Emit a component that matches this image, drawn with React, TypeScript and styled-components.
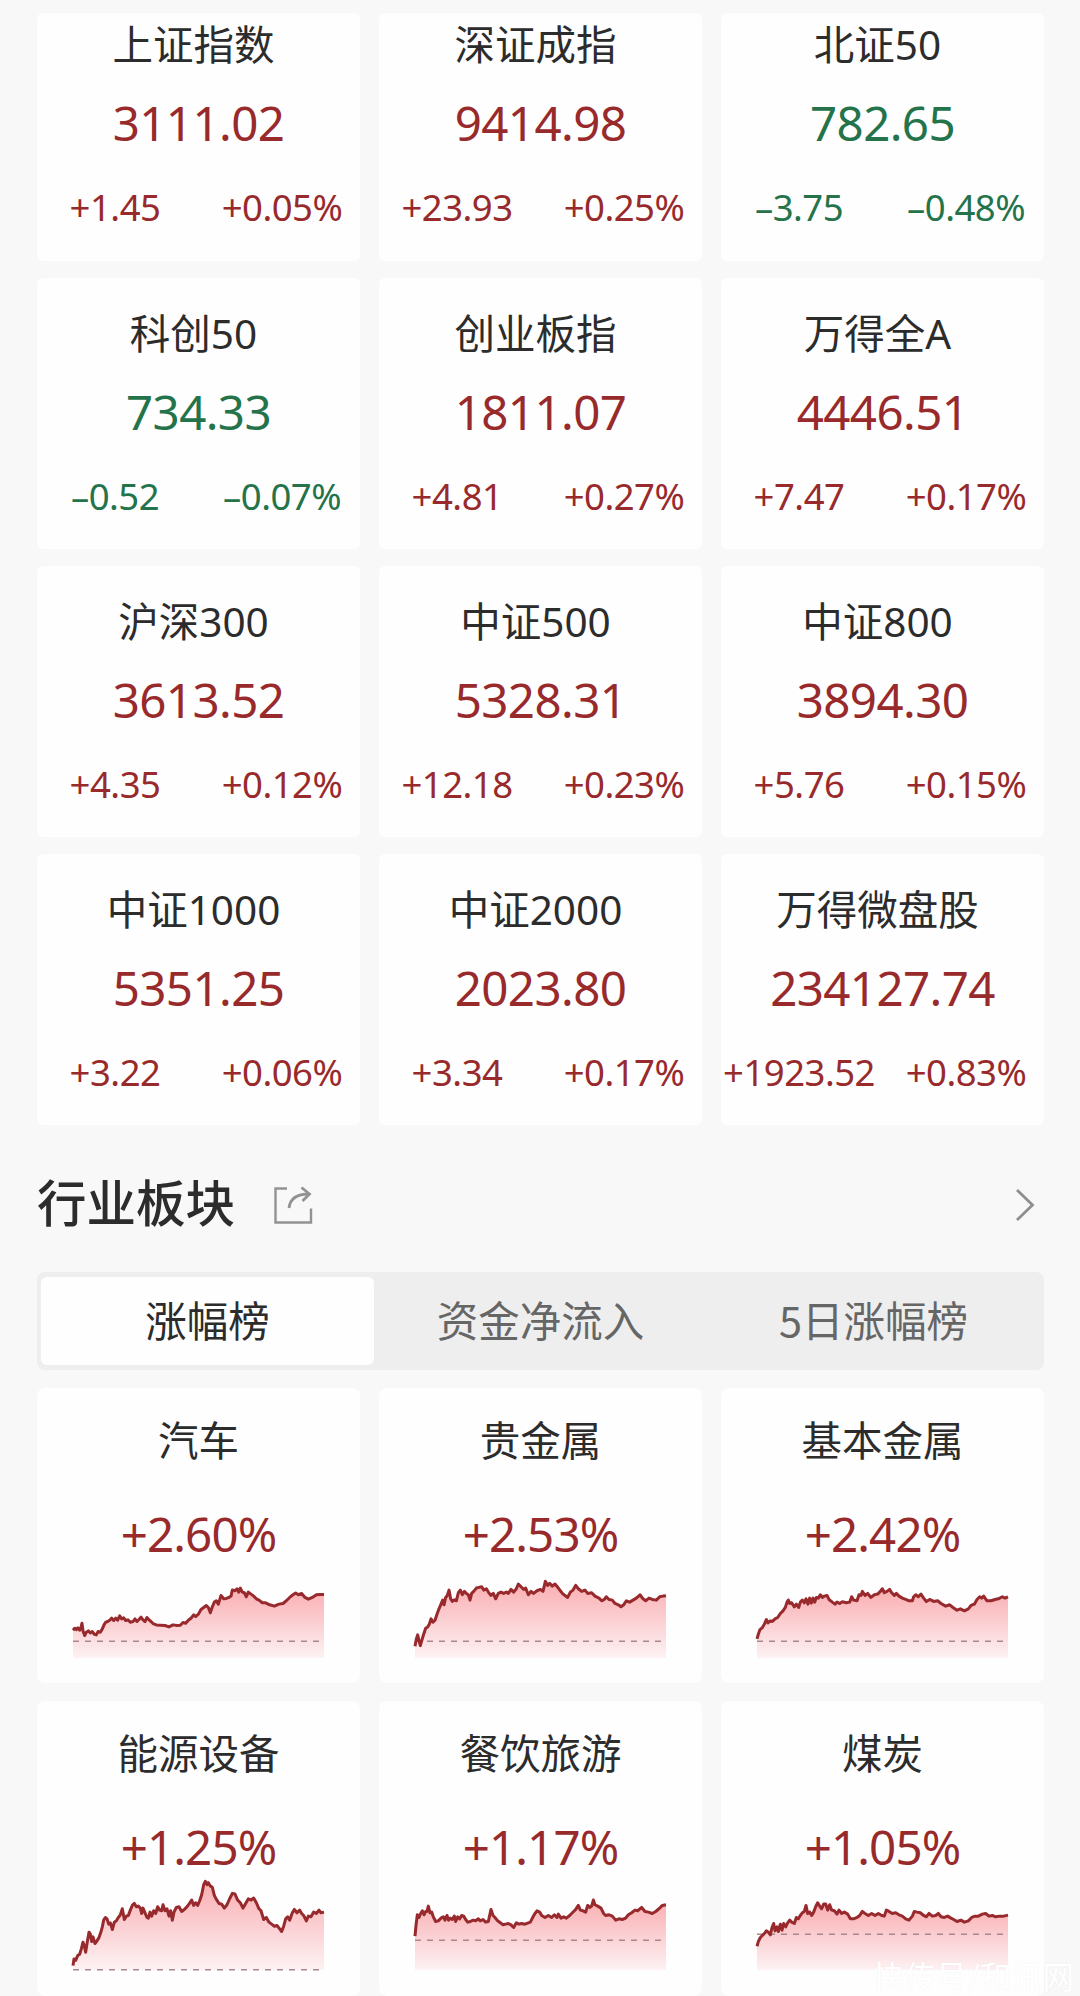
import React from 'react';
import styled, { createGlobalStyle } from 'styled-components';

const CJK = "'Noto Sans CJK SC', sans-serif";
const NUM = "'Noto Sans', 'Noto Sans CJK SC', sans-serif";
const RED = '#982a2c';
const GREEN = '#24734a';

const GlobalStyle = createGlobalStyle`
  * { box-sizing: border-box; }
  body { margin: 0; background: #f7f7f7; }
`;

const Page = styled.main`
  position: relative;
  width: 1080px;
  height: 1996px;
  padding: 13px 36px 0 37px;
  overflow: hidden;
  background: #f8f8f8;
  color: #2c2c2c;
  font-family: ${CJK};
`;

const Grid = styled.section<{ $gap: number }>`
  display: grid;
  grid-template-columns: repeat(3, 323px);
  justify-content: space-between;
  row-gap: ${(p) => p.$gap}px;
`;

const IndexCard = styled.article<{ $first: boolean }>`
  height: ${(p) => (p.$first ? 248 : 271)}px;
  padding-top: ${(p) => (p.$first ? 4 : 28)}px;
  border-radius: 6px;
  background: #fefefe;
`;

const IndexName = styled.h3`
  margin: 0 10px 0 0;
  font-family: ${NUM};
  font-weight: 400;
  font-size: 40.5px;
  line-height: 56px;
  text-align: center;
`;

const IndexValue = styled.div<{ $down?: boolean }>`
  margin-top: 18px;
  color: ${(p) => (p.$down ? GREEN : RED)};
  font-family: ${NUM};
  font-size: 47.5px;
  line-height: 64px;
  letter-spacing: -0.6px;
  text-align: center;
`;

const Changes = styled.div<{ $down?: boolean }>`
  display: grid;
  grid-template-columns: 156px 167px;
  margin-top: 27px;
  color: ${(p) => (p.$down ? GREEN : RED)};
  font-family: ${NUM};
  font-size: 36.5px;
  line-height: 50px;
  letter-spacing: -0.5px;
  white-space: nowrap;
`;

const Amount = styled.span`
  display: flex;
  justify-content: center;
`;

const Percent = styled(Amount)`
  padding-left: 11px;
`;

const SectionHead = styled.header`
  display: flex;
  align-items: center;
  height: 72px;
  margin-top: 42px;
`;

const SectionTitle = styled.h2`
  margin: 0;
  padding-bottom: 5px;
  font-size: 49.5px;
  font-weight: 500;
  line-height: 67px;
`;

const ShareIcon = styled.svg`
  width: 40px;
  height: 40px;
  margin: 3px 0 0 38px;
`;

const ChevronIcon = styled.svg`
  width: 20px;
  height: 34px;
  margin: 4px 9px 0 auto;
`;

const Tabs = styled.nav`
  display: grid;
  grid-template-columns: repeat(3, 1fr);
  height: 98px;
  margin-top: 33px;
  padding: 5px 4px;
  border-radius: 8px;
  background: #eeeeee;
`;

const Tab = styled.button<{ $active?: boolean }>`
  padding: 0 0 4px;
  border: 0;
  border-radius: 6px;
  background: ${(p) => (p.$active ? '#fefefe' : 'transparent')};
  color: ${(p) => (p.$active ? '#2c2c2c' : '#666')};
  font-family: ${CJK};
  font-size: 41.5px;
  line-height: 60px;
`;

const SectorArea = styled.div`
  margin-top: 18px;
`;

const SectorCard = styled.article`
  display: flex;
  flex-direction: column;
  align-items: center;
  height: 295px;
  padding-top: 23px;
  border-radius: 8px;
  background: #fefefe;
`;

const SectorName = styled.h3`
  margin: 0;
  font-weight: 400;
  font-size: 40.5px;
  line-height: 56px;
`;

const SectorChange = styled.div`
  margin-top: 35px;
  color: ${RED};
  font-family: ${NUM};
  font-size: 47.5px;
  line-height: 64px;
  letter-spacing: -0.9px;
`;

const Chart = styled.svg`
  display: block;
  width: 251px;
  height: 90px;
  margin-top: 1.5px;
  overflow: visible;
`;

const Watermark = styled.span`
  position: absolute;
  right: 6px;
  top: 1955px;
  color: #fff;
  font-size: 31.5px;
  line-height: 40px;
  text-shadow: 0 0 2px rgba(0, 0, 0, 0.05);
`;

type Index = [name: string, value: string, amount: string, percent: string];

const indices: Index[] = [
  ['上证指数', '3111.02', '+1.45', '+0.05%'],
  ['深证成指', '9414.98', '+23.93', '+0.25%'],
  ['北证50', '782.65', '–3.75', '–0.48%'],
  ['科创50', '734.33', '–0.52', '–0.07%'],
  ['创业板指', '1811.07', '+4.81', '+0.27%'],
  ['万得全A', '4446.51', '+7.47', '+0.17%'],
  ['沪深300', '3613.52', '+4.35', '+0.12%'],
  ['中证500', '5328.31', '+12.18', '+0.23%'],
  ['中证800', '3894.30', '+5.76', '+0.15%'],
  ['中证1000', '5351.25', '+3.22', '+0.06%'],
  ['中证2000', '2023.80', '+3.34', '+0.17%'],
  ['万得微盘股', '234127.74', '+1923.52', '+0.83%'],
];

interface Sector {
  name: string;
  change: string;
  base: number;
  line: string;
}

/* Line points are in chart units: 753 wide, 269 high. */
const sectors: Sector[] = [
  {
    name: '汽车', change: '+2.60%', base: 219,
    line: '0,186 5,180 10,184 15,179 20,186 24,178 27,165 30,188 35,202 40,192 46,188 52,194 58,190 64,198 70,200 75,190 82,192 88,182 93,170 98,162 104,160 110,156 116,150 122,157 128,150 134,156 140,143 146,152 152,149 158,157 165,155 172,162 180,160 186,152 192,160 198,154 204,147 210,155 216,160 222,148 228,155 234,160 240,166 250,170 262,171 276,172 288,176 300,170 312,172 322,171 330,163 338,165 346,156 354,150 362,140 368,145 376,138 384,124 392,118 400,112 406,118 412,134 418,116 424,102 430,98 436,108 444,82 452,92 460,91 468,88 474,84 478,66 486,68 492,62 497,72 502,60 508,72 514,74 520,86 526,72 534,78 542,84 550,92 558,96 568,104 578,104 590,110 604,114 618,108 630,106 640,98 650,88 660,80 668,75 676,80 686,76 696,88 706,93 718,88 730,80 742,79 753,79',
  },
  {
    name: '贵金属', change: '+2.53%', base: 219,
    line: '0,234 4,212 8,200 12,218 16,232 20,218 26,198 32,180 38,176 43,168 48,152 54,162 60,156 66,138 72,122 78,108 83,96 87,110 92,88 97,82 102,66 107,92 112,100 118,95 124,98 130,74 136,66 142,80 148,70 154,76 160,80 165,96 170,76 176,70 184,60 192,58 200,56 206,66 214,62 220,72 228,82 235,76 242,92 250,76 258,72 266,76 274,72 280,76 288,64 296,72 304,62 310,48 318,56 326,64 332,60 340,80 348,70 356,76 366,68 376,64 384,70 391,40 398,52 404,46 412,54 420,48 430,60 436,68 444,78 450,82 458,88 466,72 474,66 482,52 490,62 500,70 510,66 518,76 530,74 540,84 552,90 560,98 568,94 574,86 582,94 592,96 600,106 610,110 618,116 626,110 634,98 644,102 654,96 664,90 675,80 684,92 692,98 702,90 712,94 724,96 734,86 744,84 753,83',
  },
  {
    name: '基本金属', change: '+2.42%', base: 219,
    line: '0,212 4,198 9,184 16,178 22,168 28,154 33,164 40,158 46,160 54,152 62,148 70,136 78,128 85,118 90,102 94,96 98,106 104,104 112,116 118,108 125,118 130,102 136,96 142,104 147,92 153,108 158,90 163,105 168,90 173,102 178,88 184,90 190,80 196,88 202,84 210,82 216,94 226,102 234,108 240,102 248,106 256,101 268,104 278,102 284,86 290,96 300,98 306,80 312,82 316,70 324,82 332,76 342,88 352,80 362,78 370,70 376,62 382,74 390,70 398,64 404,74 412,82 418,76 426,84 436,90 446,94 456,98 466,98 470,86 476,80 484,86 492,78 500,90 508,100 518,94 530,100 542,98 552,106 566,114 578,110 588,118 600,126 610,122 622,128 634,122 642,112 652,108 660,94 668,86 674,90 680,84 690,98 702,98 714,94 724,92 736,86 744,90 753,86',
  },
  {
    name: '能源设备', change: '+1.25%', base: 268,
    line: '0,256 3,236 8,240 14,226 20,222 25,206 30,186 34,198 38,216 43,184 48,156 52,162 56,184 60,170 66,190 72,182 78,172 83,158 88,140 92,120 97,112 102,116 107,132 112,128 118,148 124,126 130,122 136,112 142,104 148,86 154,118 160,108 166,106 172,90 178,76 184,70 190,80 196,78 202,84 206,100 210,84 216,98 222,112 226,114 231,96 236,108 242,92 248,100 254,80 260,90 266,92 270,74 276,92 282,86 288,108 293,92 298,120 303,96 310,82 318,80 326,94 334,88 340,82 348,72 356,60 362,76 368,68 374,76 380,62 386,44 392,14 397,4 402,14 406,8 412,18 418,22 424,46 430,58 438,70 446,72 454,84 462,74 470,56 478,40 486,42 494,60 502,68 510,84 518,70 526,56 534,60 542,54 550,68 558,86 564,92 572,118 580,112 588,126 596,132 604,138 612,136 620,146 626,154 632,138 638,116 644,110 650,120 658,98 664,88 672,98 680,90 686,100 692,106 700,122 706,108 714,110 722,96 730,100 738,90 744,98 753,96',
  },
  {
    name: '餐饮旅游', change: '+1.17%', base: 180,
    line: '0,168 3,136 7,104 12,112 17,100 22,92 27,104 32,94 36,94 40,78 45,98 50,96 55,110 62,124 70,122 78,114 85,110 90,120 96,106 101,120 106,114 112,118 118,108 122,124 128,110 134,116 140,106 146,108 152,118 158,126 166,124 174,120 182,122 190,116 196,122 204,118 212,126 220,124 228,88 234,106 240,112 248,122 256,128 264,134 272,132 280,130 288,134 296,142 304,128 312,132 320,130 330,132 340,128 346,126 354,110 360,100 366,92 374,96 380,106 390,112 400,106 410,112 418,104 426,112 430,102 438,114 446,110 454,114 464,106 472,98 482,88 490,76 496,90 504,92 512,96 518,76 524,82 530,78 535,60 540,74 548,78 558,84 566,100 572,106 582,104 592,108 602,120 612,116 622,118 632,114 640,104 650,98 660,90 668,92 680,82 690,94 700,96 712,100 722,94 732,86 742,76 753,74',
  },
  {
    name: '煤炭', change: '+1.05%', base: 162,
    line: '0,198 4,184 10,172 16,166 22,160 28,152 34,156 40,164 45,142 50,130 54,152 60,140 64,154 70,132 75,150 80,130 86,140 92,128 98,120 104,126 112,130 118,112 124,116 130,106 136,98 142,94 147,76 152,100 158,96 164,106 170,96 176,80 182,68 188,78 194,86 200,72 206,72 212,90 218,74 224,90 232,92 240,102 246,90 254,100 262,96 272,102 280,116 290,116 300,112 308,106 316,94 324,100 334,106 344,100 354,106 364,100 374,106 382,108 388,90 396,94 406,100 416,98 426,104 436,108 446,116 456,120 466,108 472,94 480,96 490,98 500,106 508,110 516,100 526,108 536,106 544,100 552,110 562,112 572,108 582,114 590,118 600,124 612,120 622,126 634,122 644,112 654,108 664,108 676,102 686,100 696,108 706,106 716,110 728,108 740,108 753,105',
  },
];

const SectorChart = ({ id, line, base }: { id: string; line: string; base: number }) => (
  <Chart viewBox="0 0 753 269" preserveAspectRatio="none">
    <defs>
      <linearGradient id={id} x1="0" y1="0" x2="0" y2="1">
        <stop offset="0" stopColor="#faaeb1" />
        <stop offset="0.5" stopColor="#fbcfd2" />
        <stop offset="1" stopColor="#fdf2f3" />
      </linearGradient>
    </defs>
    <polygon points={`0,269 ${line} 753,269`} fill={`url(#${id})`} />
    <line x1="0" y1={base} x2="742" y2={base} stroke="#a8888e" strokeWidth="4.5" strokeDasharray="18 18" />
    <polyline points={line} fill="none" stroke="#98292d" strokeWidth="9" strokeLinejoin="round" />
  </Chart>
);

export default function App() {
  return (
    <>
      <GlobalStyle />
      <Page>
        <Grid $gap={17}>
          {indices.map(([name, value, amount, percent], i) => {
            const down = amount.startsWith('–');
            return (
              <IndexCard key={name} $first={i < 3}>
                <IndexName>{name}</IndexName>
                <IndexValue $down={down}>{value}</IndexValue>
                <Changes $down={down}>
                  <Amount>{amount}</Amount>
                  <Percent>{percent}</Percent>
                </Changes>
              </IndexCard>
            );
          })}
        </Grid>
        <SectionHead>
          <SectionTitle>行业板块</SectionTitle>
          <ShareIcon viewBox="0 0 40 40" fill="none" stroke="#929292" strokeWidth="2.4">
            <path d="M14 3.5H2.500v34h35.500V23.500" />
            <path d="M16 23c1-9 8-14 20-14" strokeWidth="2.8" />
            <path d="M28.500 2.500l8 6.500-7 7" strokeWidth="2.800" />
          </ShareIcon>
          <ChevronIcon viewBox="0 0 20 34" fill="none" stroke="#8e8e8e" strokeWidth="2.8">
            <path d="M2 2l15.500 15L2 32" />
          </ChevronIcon>
        </SectionHead>
        <Tabs>
          <Tab $active>涨幅榜</Tab>
          <Tab>资金净流入</Tab>
          <Tab>5日涨幅榜</Tab>
        </Tabs>
        <SectorArea>
          <Grid $gap={17.5}>
            {sectors.map((s, i) => (
              <SectorCard key={s.name}>
                <SectorName>{s.name}</SectorName>
                <SectorChange>{s.change}</SectorChange>
                <SectorChart id={`fill${i}`} line={s.line} base={s.base} />
              </SectorCard>
            ))}
          </Grid>
        </SectorArea>
        <Watermark>快传号/和讯网</Watermark>
      </Page>
    </>
  );
}
